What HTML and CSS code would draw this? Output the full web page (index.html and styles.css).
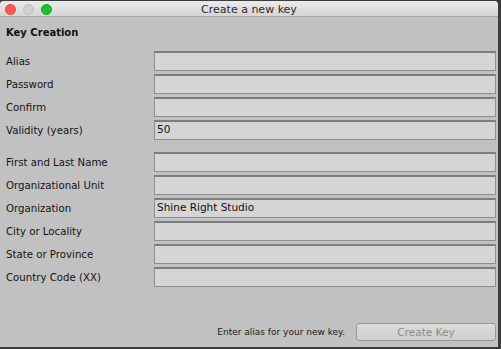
FILE: index.html
```html
<!DOCTYPE html>
<html lang="en">
<head>
  <meta charset="UTF-8">
  <title>Create a new key</title>
  <link rel="stylesheet" href="styles.css">
</head>
<body>
  <div class="window">
    <div class="titlebar">
      <div class="lights">
        <span class="light red"></span>
        <span class="light gray"></span>
        <span class="light green"></span>
      </div>
      <div class="title">Create a new key</div>
    </div>

    <div class="content">
      <div class="heading">Key Creation</div>

      <div class="group">
        <label class="label">Alias</label>
        <div class="field"></div>
        <label class="label">Password</label>
        <div class="field"></div>
        <label class="label">Confirm</label>
        <div class="field"></div>
        <label class="label">Validity (years)</label>
        <div class="field">50</div>
      </div>

      <div class="group">
        <label class="label">First and Last Name</label>
        <div class="field"></div>
        <label class="label">Organizational Unit</label>
        <div class="field"></div>
        <label class="label">Organization</label>
        <div class="field">Shine Right Studio</div>
        <label class="label">City or Locality</label>
        <div class="field"></div>
        <label class="label">State or Province</label>
        <div class="field"></div>
        <label class="label">Country Code (XX)</label>
        <div class="field"></div>
      </div>

      <div class="footer">
        <span class="hint">Enter alias for your new key.</span>
        <button class="button" disabled>Create Key</button>
      </div>
    </div>
  </div>
</body>
</html>
```

FILE: styles.css
```css
body {
  margin: 0;
  background-color: #3c3c3c;
  font-family: "DejaVu Sans", sans-serif;
  color: #111;
}

.window {
  width: 498px;
  height: 346px;
  margin-top: 1px;
  background-color: #c1c1c1;
  border-radius: 4px 4px 0 0;
  display: flex;
  flex-direction: column;
  overflow: hidden;
}

.titlebar {
  height: 15px;
  background: linear-gradient(#ebebeb, #d5d5d5);
  border-bottom: 1px solid #a9a9a9;
  position: relative;
  display: flex;
  align-items: center;
  justify-content: center;
}

.lights {
  position: absolute;
  left: 5px;
  top: 3px;
  display: flex;
  gap: 7px;
}

.light {
  width: 11px;
  height: 11px;
  border-radius: 50%;
  box-sizing: border-box;
}

.red {
  background-color: #fc5753;
  border: 1px solid #df4744;
}

.gray {
  background-color: #d0d0d0;
  border: 1px solid #bdbdbd;
}

.green {
  background-color: #1bc12e;
  border: 1px solid #15a524;
}

.title {
  font-size: 11px;
  color: #2a2a2a;
  padding-top: 1px;
}

.content {
  flex: 1;
  display: flex;
  flex-direction: column;
  padding: 0 2px 0 6px;
}

.heading {
  font-size: 10px;
  font-weight: bold;
  margin-top: 9px;
  height: 14px;
  line-height: 14px;
}

.group {
  display: grid;
  grid-template-columns: 148px 342px;
  grid-auto-rows: 20px;
  row-gap: 3px;
  align-items: center;
  margin-top: 11px;
}

.group + .group {
  margin-top: 12px;
}

.label {
  font-size: 10.2px;
  color: #141414;
}

.field {
  height: 20px;
  box-sizing: border-box;
  background-color: #d5d5d5;
  border: 1px solid #8e8e8e;
  border-top: 2px solid #7d7d7d;
  font-size: 10.5px;
  line-height: 15px;
  padding-left: 2px;
  color: #111;
}

.footer {
  margin-top: auto;
  margin-bottom: 6px;
  display: flex;
  justify-content: flex-end;
  align-items: center;
  gap: 11px;
}

.hint {
  font-size: 9px;
  color: #1a1a1a;
}

.button {
  width: 140px;
  height: 18px;
  font-family: "DejaVu Sans", sans-serif;
  font-size: 10.5px;
  color: #8c8c8c;
  background: linear-gradient(#dcdcdc, #cfcfcf);
  border: 1px solid #9a9a9a;
  border-radius: 3px;
  padding: 0;
}
```
